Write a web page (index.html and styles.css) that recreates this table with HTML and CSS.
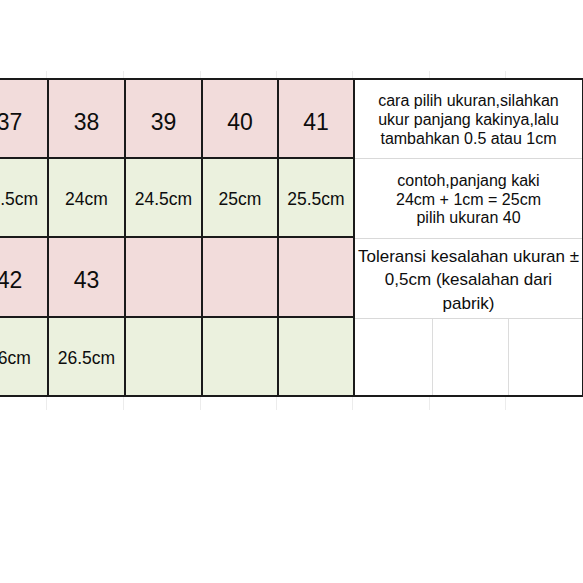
FILE: index.html
```html
<!DOCTYPE html>
<html>
<head>
<meta charset="utf-8">
<link rel="stylesheet" href="styles.css">
</head>
<body>
<div class="page">
  <div class="ghost ghost-top">
    <span></span><span></span><span></span><span></span><span></span><span></span><span></span><span></span>
  </div>
  <div class="sheet">
    <div class="cell size">37</div>
    <div class="cell size">38</div>
    <div class="cell size">39</div>
    <div class="cell size">40</div>
    <div class="cell size">41</div>
    <div class="panel">
      <div class="note">cara pilih ukuran,silahkan<br>ukur panjang kakinya,lalu<br>tambahkan 0.5 atau 1cm</div>
      <div class="note">contoh,panjang kaki<br>24cm + 1cm = 25cm<br>pilih ukuran 40</div>
      <div class="note big">Toleransi kesalahan ukuran ±<br>0,5cm (kesalahan dari<br>pabrik)</div>
      <div class="blank-row"><span></span><span></span><span></span></div>
    </div>
    <div class="cell len">23.5cm</div>
    <div class="cell len">24cm</div>
    <div class="cell len">24.5cm</div>
    <div class="cell len">25cm</div>
    <div class="cell len">25.5cm</div>
    <div class="cell size">42</div>
    <div class="cell size">43</div>
    <div class="cell size"></div>
    <div class="cell size"></div>
    <div class="cell size"></div>
    <div class="cell len">26cm</div>
    <div class="cell len">26.5cm</div>
    <div class="cell len"></div>
    <div class="cell len"></div>
    <div class="cell len"></div>
  </div>
  <div class="ghost ghost-bottom">
    <span></span><span></span><span></span><span></span><span></span><span></span><span></span><span></span>
  </div>
</div>
</body>
</html>
```

FILE: styles.css
```css
html, body {
  margin: 0;
  padding: 0;
  background: #ffffff;
}

body {
  font-family: "Liberation Sans", Arial, sans-serif;
  color: #0d0d0d;
  overflow: hidden;
  width: 583px;
  height: 583px;
}

.page {
  padding-top: 71px;
  margin-left: -30px;
  width: 620px;
}

.ghost {
  display: grid;
  grid-template-columns: 2px 75px 77px 77px 76px 76px 77px 76px;
}

.ghost span {
  border-right: 1px solid #ececec;
}

.ghost-top {
  height: 7px;
}

.ghost-bottom {
  height: 13px;
}

.sheet {
  display: grid;
  grid-template-columns: 75px 75px 75px 74px 74px 227px;
  grid-template-rows: 77px 77px 78px 77px;
  gap: 2px;
  padding: 2px;
  background: #1a1a1a;
  box-sizing: border-box;
  width: max-content;
}

.cell {
  display: flex;
  align-items: center;
  justify-content: center;
  white-space: nowrap;
  overflow: visible;
}

.size {
  background: #f2dcdb;
  font-size: 23px;
  padding-top: 7px;
  box-sizing: border-box;
}

.len {
  background: #ebf1de;
  font-size: 17.5px;
  padding-top: 4px;
  box-sizing: border-box;
}

.panel {
  grid-column: 6;
  grid-row: 1 / span 4;
  display: grid;
  grid-template-rows: 78px 79px 79px 1fr;
  row-gap: 1px;
  background: #d9d9d9;
}

.note {
  background: #ffffff;
  display: flex;
  align-items: center;
  justify-content: center;
  text-align: center;
  font-size: 16px;
  line-height: 18.7px;
  white-space: nowrap;
  padding-top: 3px;
  box-sizing: border-box;
}

.note.big {
  font-size: 17px;
  line-height: 23.5px;
  padding-top: 3px;
}

.blank-row {
  display: grid;
  grid-template-columns: 77px 75px 1fr;
  column-gap: 1px;
  background: #dcdcdc;
}

.blank-row span {
  background: #ffffff;
}
```
